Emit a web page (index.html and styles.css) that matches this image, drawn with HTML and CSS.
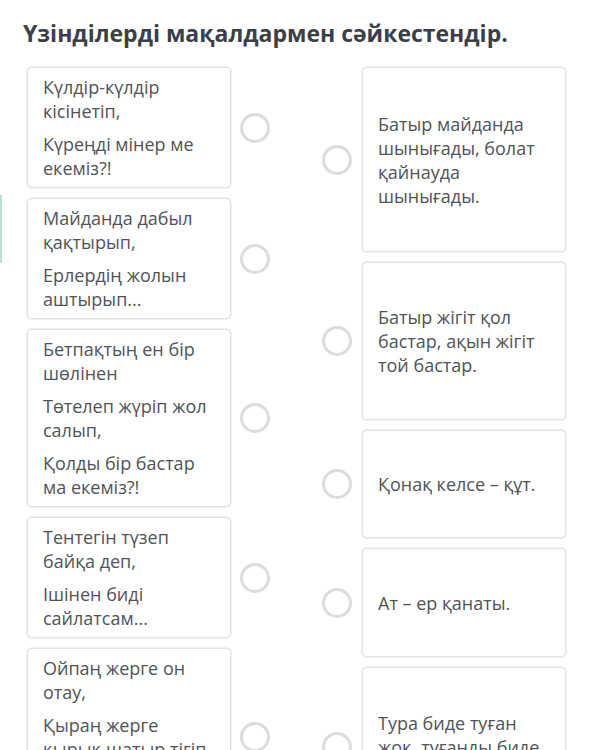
FILE: index.html
```html
<!DOCTYPE html>
<html lang="kk">
<head>
<meta charset="utf-8">
<title>Сәйкестендіру</title>
<link rel="stylesheet" href="styles.css">
</head>
<body>
<div class="edge-mark"></div>
<main class="page">
  <h1 class="title">Үзінділерді мақалдармен сәйкестендір.</h1>
  <div class="match">
    <div class="col col-left">
      <div class="row">
        <div class="card">
          <p>Күлдір-күлдір кісінетіп,</p>
          <p>Күреңді мінер ме екеміз?!</p>
        </div>
        <span class="radio"></span>
      </div>
      <div class="row">
        <div class="card">
          <p>Майданда дабыл қақтырып,</p>
          <p>Ерлердің жолын аштырып...</p>
        </div>
        <span class="radio"></span>
      </div>
      <div class="row">
        <div class="card">
          <p>Бетпақтың ен бір шөлінен</p>
          <p>Төтелеп жүріп жол салып,</p>
          <p>Қолды бір бастар ма екеміз?!</p>
        </div>
        <span class="radio"></span>
      </div>
      <div class="row">
        <div class="card">
          <p>Тентегін түзеп байқа деп,</p>
          <p>Ішінен биді сайлатсам...</p>
        </div>
        <span class="radio"></span>
      </div>
      <div class="row">
        <div class="card">
          <p>Ойпаң жерге он отау,</p>
          <p>Қыраң жерге қырық шатыр тігіп</p>
          <p>Той бастар ма екеміз?!</p>
        </div>
        <span class="radio"></span>
      </div>
    </div>
    <div class="col col-right">
      <div class="row">
        <span class="radio"></span>
        <div class="card card-center h-185">
          <p>Батыр майданда шынығады, болат қайнауда шынығады.</p>
        </div>
      </div>
      <div class="row">
        <span class="radio"></span>
        <div class="card card-center h-158">
          <p>Батыр жігіт қол бастар, ақын жігіт той бастар.</p>
        </div>
      </div>
      <div class="row">
        <span class="radio"></span>
        <div class="card card-center h-108">
          <p>Қонақ келсе – құт.</p>
        </div>
      </div>
      <div class="row">
        <span class="radio"></span>
        <div class="card card-center h-109">
          <p>Ат – ер қанаты.</p>
        </div>
      </div>
      <div class="row">
        <span class="radio"></span>
        <div class="card card-center h-160">
          <p>Тура биде туған жоқ, туғанды биде иман жоқ.</p>
        </div>
      </div>
    </div>
  </div>
</main>
</body>
</html>
```
FILE: styles.css
```css
* { box-sizing: border-box; }

html, body {
  margin: 0;
  padding: 0;
  background: #ffffff;
}

body {
  font-family: "Open Sans", "Noto Sans", "DejaVu Sans", sans-serif;
  color: #4f5256;
  overflow: hidden;
}

.edge-mark {
  position: absolute;
  left: 0;
  top: 195px;
  width: 2px;
  height: 68px;
  background: #b9dfcd;
}

.page {
  padding: 18px 26px 0 27px;
}

.title {
  margin: 0 0 19px -4px;
  font-size: 23px;
  line-height: 30px;
  font-weight: 700;
  color: #3b4046;
  letter-spacing: 0;
}

.match {
  display: flex;
  align-items: flex-start;
  gap: 52px;
}

.col {
  display: flex;
  flex-direction: column;
  gap: 10px;
}

.row {
  display: flex;
  align-items: center;
}

.col-left .row { gap: 9px; }
.col-right .row { gap: 10px; }

.card {
  width: 204px;
  border: 1px solid #e2e2e2;
  border-radius: 5px;
  padding: 7px 14px 7px 15px;
  font-size: 18px;
  line-height: 24px;
  color: #505357;
  background: #fff;
  box-shadow: 0 0 0 1px #f0f0f0;
}

.card p {
  margin: 0 0 9px;
}

.card p:last-child {
  margin-bottom: 0;
}

.card-center {
  display: flex;
  align-items: center;
}

.h-185 { height: 185px; }
.h-158 { height: 158px; }
.h-108 { height: 108px; }
.h-109 { height: 109px; }
.h-160 { height: 160px; }

.radio {
  flex: none;
  width: 30px;
  height: 30px;
  border-radius: 50%;
  border: 3px solid #dcdcdc;
  background: #fff;
}
```
